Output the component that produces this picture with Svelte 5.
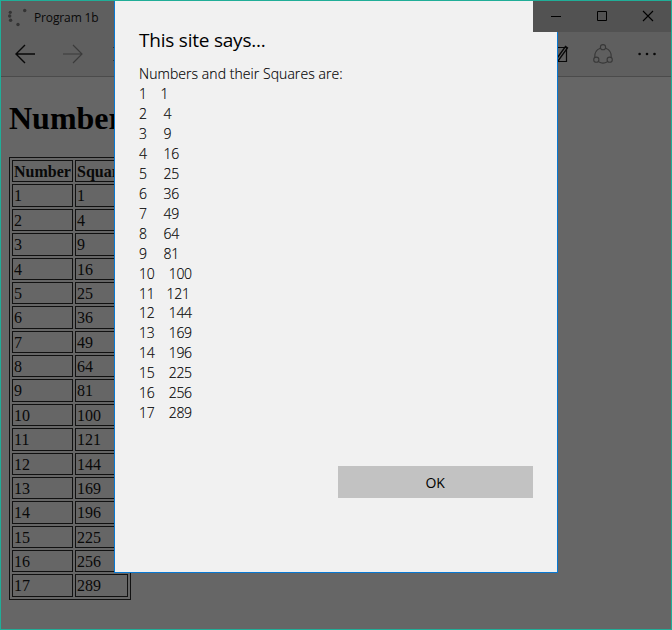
<script>
  const squares = Array.from({ length: 17 }, (_, i) => ({ n: i + 1, sq: (i + 1) ** 2 }));
  const offset = (n) => (n === 1 ? 21.5 : n < 10 ? 24.5 : n === 11 ? 27.5 : 29.7);
</script>

<div class="window">
  <header>
    <div class="titlebar">
      <svg class="spinner" width="20" height="22" viewBox="0 0 20 22">
        <g fill="#343434">
          <circle cx="16.700" cy="4.500" r="1.700" /><circle cx="2.300" cy="6.300" r="1.600" />
          <circle cx="1.700" cy="10" r="1.700" /><circle cx="2.600" cy="14.300" r="1.700" />
          <circle cx="10" cy="18.500" r="1.700" />
        </g>
      </svg>
      <span class="tab">Program 1b</span>
    </div>
    <nav>
      <svg width="670" height="45" viewBox="1 31 670 45" fill="none">
        <path d="M16 54H35M25 45L16 54L25 63" stroke="#080808" stroke-width="1.4" />
        <path d="M63 54H82M73 45L82 54L73 63" stroke="#3b3b3b" stroke-width="1.2" />
        <path d="M113.500 47v1M113.500 60v1" stroke="#333" />
        <path d="M550 47.500H566.500V61.500H550" stroke="#080808" stroke-width="1.2" />
        <path d="M555 61L565.500 46.500L567.500 48L558 61" stroke="#080808" stroke-width="1.3" />
        <g stroke="#383838" stroke-width="1.100">
          <circle cx="603" cy="47.200" r="2.600" />
          <circle cx="596.300" cy="59.700" r="2.600" />
          <circle cx="609.700" cy="59.700" r="2.600" />
          <path d="M600.300 48.300A8.700 8.700 0 0 0 594.800 57.300M605.700 48.300A8.700 8.700 0 0 1 611.200 57.300M598.600 61.800A8.500 8.500 0 0 0 607.400 61.800" />
        </g>
        <g fill="#080808"><circle cx="639.600" cy="54" r="1.300" /><circle cx="647" cy="54" r="1.300" /><circle cx="654.500" cy="54" r="1.300" /></g>
      </svg>
    </nav>
  </header>

  <main>
    <h1>Numbers</h1>
    <div class="table">
      <b>Number</b><b>Square</b>
      {#each squares as row}
        <span>{row.n}</span><span>{row.sq}</span>
      {/each}
    </div>
  </main>

  <section class="dialog">
    <h2>This site says...</h2>
    <p>Numbers and their Squares are:</p>
    <ul>
      {#each squares as row}
        <li><span style="width: {offset(row.n)}px">{row.n}</span><span>{row.sq}</span></li>
      {/each}
    </ul>
    <button>OK</button>
  </section>

  <div class="controls">
    <svg width="138" height="31" viewBox="533 1 138 31" fill="none" stroke="#000">
      <path d="M551 16.500H561" />
      <path d="M597.500 11.500H606.500V20.500H597.500Z" />
      <path d="M643 11L653 21M653 11L643 21" stroke-width="1.100" />
    </svg>
  </div>
</div>

<style>
  .window {
    position: relative;
    box-sizing: border-box;
    width: 672px;
    height: 630px;
    overflow: hidden;
    border: 1px solid #20ae98;
    background: #666;
    color: #000;
  }
  header {
    box-sizing: border-box;
    height: 76px;
    background: #5f5f5f;
    border-bottom: 1px solid #4b4b4b;
  }
  .titlebar {
    display: flex;
    height: 30px;
    padding-left: 7px;
  }
  .spinner { margin-top: 5px; }
  .tab {
    margin-left: 6px;
    font: 12px/34px "Open Sans", sans-serif;
    letter-spacing: -0.13px;
    color: #090909;
  }
  nav, nav svg, .controls svg { display: block; }
  main { padding-left: 8px; }
  h1 {
    margin: 22px 0 20px;
    font: bold 32px/38px "Liberation Serif", serif;
  }
  .table {
    display: grid;
    grid-template-columns: 61px 53px;
    grid-auto-rows: 22.39px;
    gap: 2px;
    box-sizing: border-box;
    width: 122px;
    height: 443px;
    padding: 2px;
    border: 1px solid #111;
    font: 16px/21px "Liberation Serif", serif;
  }
  .table > * {
    box-sizing: border-box;
    min-width: 0;
    padding-left: 1px;
    border: 1px solid #111;
    color: #090909;
  }
  .dialog {
    position: absolute;
    top: 0;
    left: 113px;
    box-sizing: border-box;
    width: 444px;
    height: 572px;
    padding: 24px 23px 0 24px;
    border: 1px solid #0878d2;
    border-top: 0;
    background: #f1f1f1;
    font: 300 14px/20px "Open Sans", sans-serif;
    -webkit-text-stroke: 0.15px #000;
  }
  h2 {
    margin: 0 0 9px;
    font-size: 19px;
    line-height: 30px;
    font-weight: 400;
    letter-spacing: -0.22px;
    -webkit-text-stroke: 0;
  }
  p { margin: 0; white-space: nowrap; letter-spacing: 0.06px; }
  ul { margin: 0; padding: 0; list-style: none; }
  li { display: flex; height: 19.96px; letter-spacing: -0.3px; }
  li span { flex: none; }
  button {
    display: block;
    width: 195px;
    height: 32px;
    margin: 42.680px 0 0 199px;
    padding: 0;
    border: 0;
    background: #c2c2c2;
    font: 400 14px/33px "Open Sans", sans-serif;
    letter-spacing: -0.2px;
    text-indent: -1px;
    color: #000;
    -webkit-text-stroke: 0;
  }
  .controls {
    position: absolute;
    top: 0;
    right: 0;
    width: 138px;
    height: 31px;
    background: #525252;
  }
</style>
